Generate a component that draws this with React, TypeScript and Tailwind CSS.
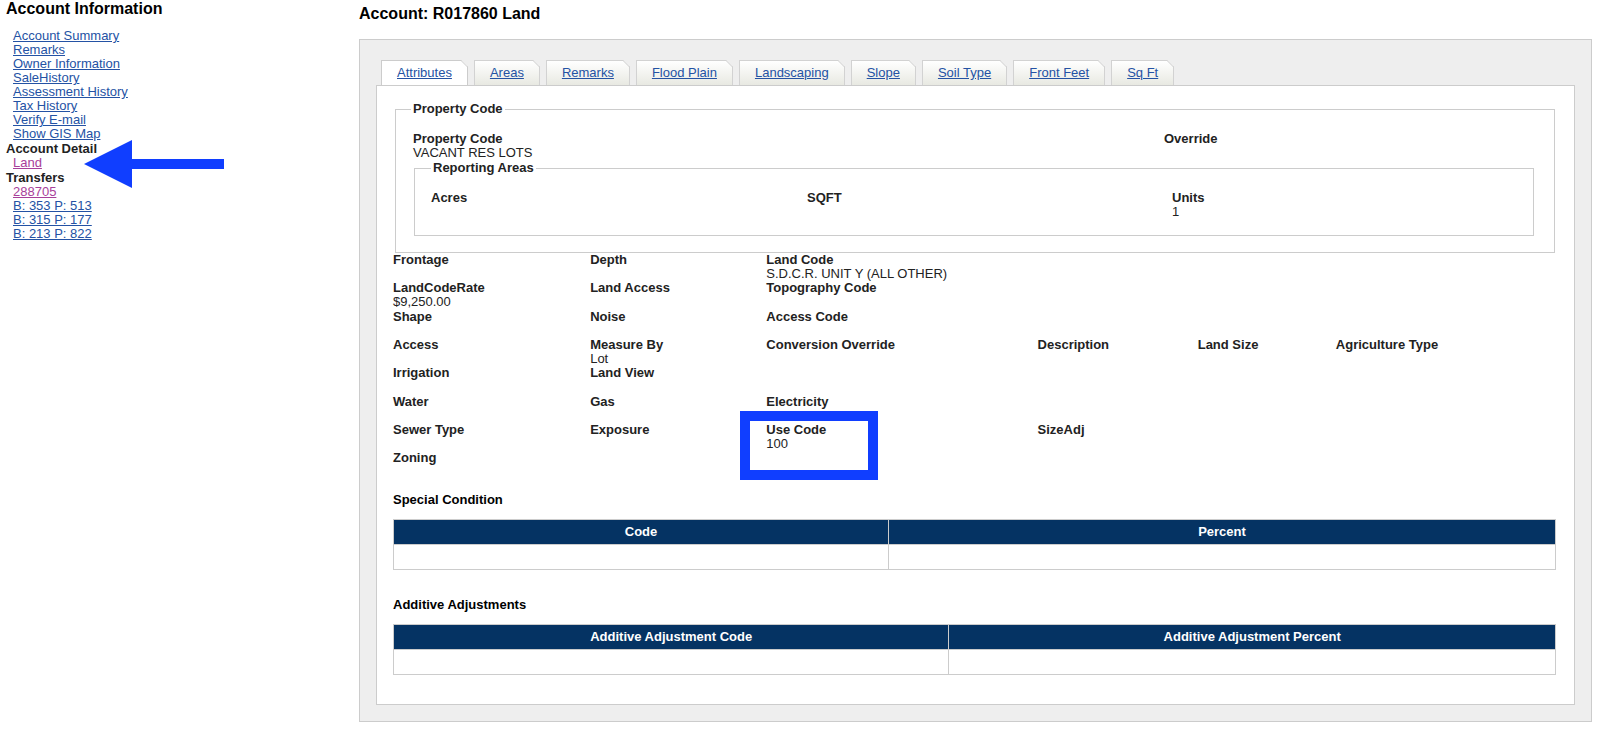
import React from "react";

type Field = { label: string; value?: string; marked?: boolean };

const accountLinks = [
  "Account Summary",
  "Remarks",
  "Owner Information",
  "SaleHistory",
  "Assessment History",
  "Tax History",
  "Verify E-mail",
  "Show GIS Map",
];

const transfers = [
  { label: "288705", visited: true },
  { label: "B: 353 P: 513" },
  { label: "B: 315 P: 177" },
  { label: "B: 213 P: 822" },
];

const tabs = [
  "Attributes",
  "Areas",
  "Remarks",
  "Flood Plain",
  "Landscaping",
  "Slope",
  "Soil Type",
  "Front Feet",
  "Sq Ft",
];

const rows: Field[][] = [
  [{ label: "Frontage" }, { label: "Depth" }, { label: "Land Code", value: "S.D.C.R. UNIT Y (ALL OTHER)" }],
  [{ label: "LandCodeRate", value: "$9,250.00" }, { label: "Land Access" }, { label: "Topography Code" }],
  [{ label: "Shape" }, { label: "Noise" }, { label: "Access Code" }],
  [
    { label: "Access" },
    { label: "Measure By", value: "Lot" },
    { label: "Conversion Override" },
    { label: "Description" },
    { label: "Land Size" },
    { label: "Agriculture Type" },
  ],
  [{ label: "Irrigation" }, { label: "Land View" }],
  [{ label: "Water" }, { label: "Gas" }, { label: "Electricity" }],
  [
    { label: "Sewer Type" },
    { label: "Exposure" },
    { label: "Use Code", value: "100", marked: true },
    { label: "SizeAdj" },
  ],
  [{ label: "Zoning" }],
];

function SideLink({ label, visited }: { label: string; visited?: boolean }) {
  return (
    <a href="#" className={visited ? "text-[#a8409a] underline" : "text-[#2452a4] underline"}>
      {label}
    </a>
  );
}

function FieldCell({ label, value, marked }: Field) {
  return (
    <div className="relative min-h-7">
      <dt className="font-bold">{label}</dt>
      {value && <dd>{value}</dd>}
      {marked && (
        <span
          aria-hidden="true"
          className="pointer-events-none absolute -top-3 -left-[26px] h-[69px] w-[138px] border-10 border-[#103eff]"
        />
      )}
    </div>
  );
}

function Arrow() {
  return (
    <svg
      aria-hidden="true"
      viewBox="0 0 140 48"
      className="pointer-events-none absolute -top-4 left-[71px] h-12 w-[140px]"
      fill="#103eff"
    >
      <path d="M0 24 L48 0 V19 H140 V29 H48 V48 Z" />
    </svg>
  );
}

function Tab({ label, active }: { label: string; active: boolean }) {
  return (
    <li className="relative">
      <a
        href="#"
        className={
          active
            ? "block border-t border-r border-l border-[#ccc] bg-white px-[15px] py-[5px] leading-[14px] text-[#2452a4] underline"
            : "block border-t border-r border-l border-[#d2d2d2] bg-linear-to-b from-white to-[#e8e9e2] px-[15px] py-[5px] leading-[14px] text-[#2452a4] underline"
        }
      >
        {label}
      </a>
      <svg aria-hidden="true" viewBox="0 0 7 7" className="absolute top-0 right-0 size-[7px]">
        <path d="M0 0 H7 V7 Z" fill="#eee" />
        <path d="M0 0.5 L6.5 7" stroke="#ccc" fill="none" />
      </svg>
    </li>
  );
}

function DataTable({ title, columns, cols }: { title: string; columns: string[]; cols: string[] }) {
  const id = title.replace(" ", "-");
  return (
    <section>
      <h2 id={id} className="font-bold text-black">
        {title}
      </h2>
      <table
        aria-labelledby={id}
        className="mt-3 w-full table-fixed border-collapse border border-[#ccc]"
      >
        <thead>
          <tr className="h-[25px] bg-[#053363] text-white">
            {columns.map((c, i) => (
              <th key={c} scope="col" className={`border-x border-[#ccc] ${cols[i]}`}>
                {c}
              </th>
            ))}
          </tr>
        </thead>
        <tbody>
          <tr className="h-[25px]">
            {columns.map((c) => (
              <td key={c} className="border border-[#ccc]" />
            ))}
          </tr>
        </tbody>
      </table>
    </section>
  );
}

export default function App() {
  return (
    <div className="flex bg-white font-['Liberation_Sans',Arial,sans-serif] text-[13px] leading-[14px] text-[#222]">
      <nav aria-label="Account" className="w-[359px] shrink-0 pl-[6px]">
        <h1 className="text-base leading-[18px] font-bold text-black">Account Information</h1>
        <ul className="mt-[11px] pl-[7px]">
          {accountLinks.map((l) => (
            <li key={l}>
              <SideLink label={l} />
            </li>
          ))}
        </ul>
        <h2 className="pt-px font-bold">Account Detail</h2>
        <ul className="pl-[7px]">
          <li className="relative">
            <SideLink label="Land" visited />
            <Arrow />
          </li>
        </ul>
        <h2 className="pt-px font-bold">Transfers</h2>
        <ul className="pl-[7px]">
          {transfers.map((t) => (
            <li key={t.label}>
              <SideLink label={t.label} visited={t.visited} />
            </li>
          ))}
        </ul>
      </nav>

      <main className="mr-2 min-w-0 flex-1 pt-[5px]">
        <h1 className="text-base leading-[18px] font-bold text-black">Account: R017860 Land</h1>
        <div className="mt-4 border border-[#ccc] bg-[#eee] px-4 pt-5 pb-4">
          <ul className="flex gap-[6px] pl-[5px]">
            {tabs.map((t, i) => (
              <Tab key={t} label={t} active={i === 0} />
            ))}
          </ul>
          <div className="border border-[#ccc] bg-white pt-4 pr-[18px] pb-[29px] pl-4">
            <fieldset className="mr-px ml-[2px] border border-[#ccc] px-[18px] pb-4">
              <legend className="-ml-[3px] px-[2px] font-bold">Property Code</legend>
              <dl className="-ml-[1px] grid grid-cols-[751fr_372fr] pt-4 pb-px">
                <FieldCell label="Property Code" value="VACANT RES LOTS" />
                <FieldCell label="Override" />
              </dl>
              <fieldset className="mr-[2px] border border-[#ccc] px-4 pb-4">
                <legend className="px-[2px] font-bold">Reporting Areas</legend>
                <dl className="grid grid-cols-[376fr_365fr_345fr] pt-4">
                  <FieldCell label="Acres" />
                  <FieldCell label="SQFT" />
                  <FieldCell label="Units" value="1" />
                </dl>
              </fieldset>
            </fieldset>
            <div>
              {rows.map((r, i) => (
                <dl
                  key={i}
                  className="grid grid-cols-[197fr_176fr_271fr_160fr_138fr_220fr] nth-[3n]:pt-px"
                >
                  {r.map((f) => (
                    <FieldCell key={f.label} {...f} />
                  ))}
                </dl>
              ))}
            </div>
            <div className="flex flex-col gap-7 pt-[14px]">
              <DataTable title="Special Condition" columns={["Code", "Percent"]} cols={["w-[42.6%]", "w-[57.4%]"]} />
              <DataTable
                title="Additive Adjustments"
                columns={["Additive Adjustment Code", "Additive Adjustment Percent"]}
                cols={["w-[47.8%]", "w-[52.2%]"]}
              />
            </div>
          </div>
        </div>
      </main>
    </div>
  );
}
